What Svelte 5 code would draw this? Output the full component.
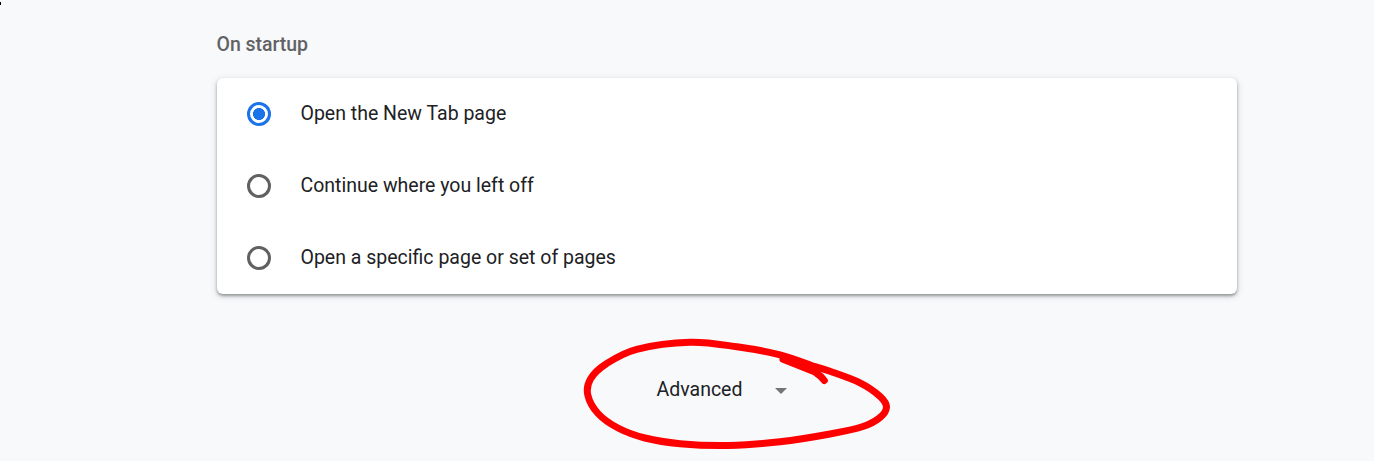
<script>
  const options = ['Open the New Tab page', 'Continue where you left off', 'Open a specific page or set of pages'];
  let selected = $state(0);

  const loop = [
    [813, 366], [780, 354.8], [737, 346.8], [690, 342.2],
    [636.7, 349.3], [606, 364], [590.5, 379], [587.8, 395], [598, 413.5], [618, 428],
    [645, 438], [680, 443.7], [728, 445.5], [780, 441.8], [830, 434], [863, 426.5], [880, 417.5],
    [886.5, 407], [880, 396.3], [860, 382.8], [830, 371.3], [813, 366]
  ];

  // Smooth curve passing through every point of the pen stroke
  function smooth(p) {
    let d = `M${p[0]}`;
    for (let i = 0; i < p.length - 1; i++) {
      const a = p[Math.max(i - 1, 0)], b = p[i], c = p[i + 1], e = p[Math.min(i + 2, p.length - 1)];
      d += `C${b[0] + (c[0] - a[0]) / 6},${b[1] + (c[1] - a[1]) / 6} ${c[0] - (e[0] - b[0]) / 6},${c[1] - (e[1] - b[1]) / 6} ${c}`;
    }
    return d;
  }
</script>

<main>
  <h2>On startup</h2>
  <section class="card">
    {#each options as option, i}
      <button class="row" onclick={() => (selected = i)}>
        <span class="radio" class:checked={selected === i}></span>
        <span class="label">{option}</span>
      </button>
    {/each}
  </section>
  <div class="advanced">
    <span>Advanced</span>
    <svg class="caret" width="12" height="6" viewBox="0 0 12 6"><path d="M0 0h12L6 6z" fill="#757575" /></svg>
    <svg class="mark" width="320" height="120" viewBox="577 335 320 120" fill="none" stroke="#fe0000" stroke-width="7" stroke-linecap="round" stroke-linejoin="round">
      <path d={smooth(loop)} />
      <path d="M783 359.3L800 366L815 372Q821 376 824.3 380.5" />
    </svg>
  </div>
  <span class="speck"></span>
</main>

<style>
  :global(body) { background: #f8f9fb; }
  main {
    box-sizing: border-box;
    height: 461px;
    padding: 33px 137px 0 217px;
    overflow: hidden;
    position: relative;
    font: 19.5px/24px Roboto, sans-serif;
    color: #202124;
  }
  h2 { margin: 0 0 21px; font-size: 19.5px; line-height: 24px; font-weight: 500; letter-spacing: -0.05px; color: #616264; text-indent: -0.5px; }
  .card {
    height: 216px;
    border-radius: 6px;
    background: #fff;
    box-shadow: 0 2px 3px rgba(60, 64, 67, .45), 0 2px 6px 1px rgba(60, 64, 67, .15);
  }
  .row {
    display: flex;
    align-items: center;
    gap: 29.5px;
    width: 100%;
    height: 72px;
    padding: 0 30px;
    border: 0;
    background: none;
    font: inherit;
    color: inherit;
    text-align: left;
  }
  .radio { box-sizing: border-box; width: 24px; height: 24px; border: 3px solid #616161; border-radius: 50%; }
  .checked { border-color: #1a73e8; background: radial-gradient(circle, #1a73e8 5.7px, transparent 6.3px); }
  .advanced { position: relative; display: flex; align-items: center; height: 24px; margin: 84px 0 0 439.5px; }
  .caret { margin-left: 32.5px; margin-top: 1px; }
  .mark { position: absolute; left: -79.5px; top: -43px; pointer-events: none; filter: blur(.5px); }
  .speck { position: absolute; left: 0; top: 2px; width: 1px; height: 3px; background: #000; }
</style>
